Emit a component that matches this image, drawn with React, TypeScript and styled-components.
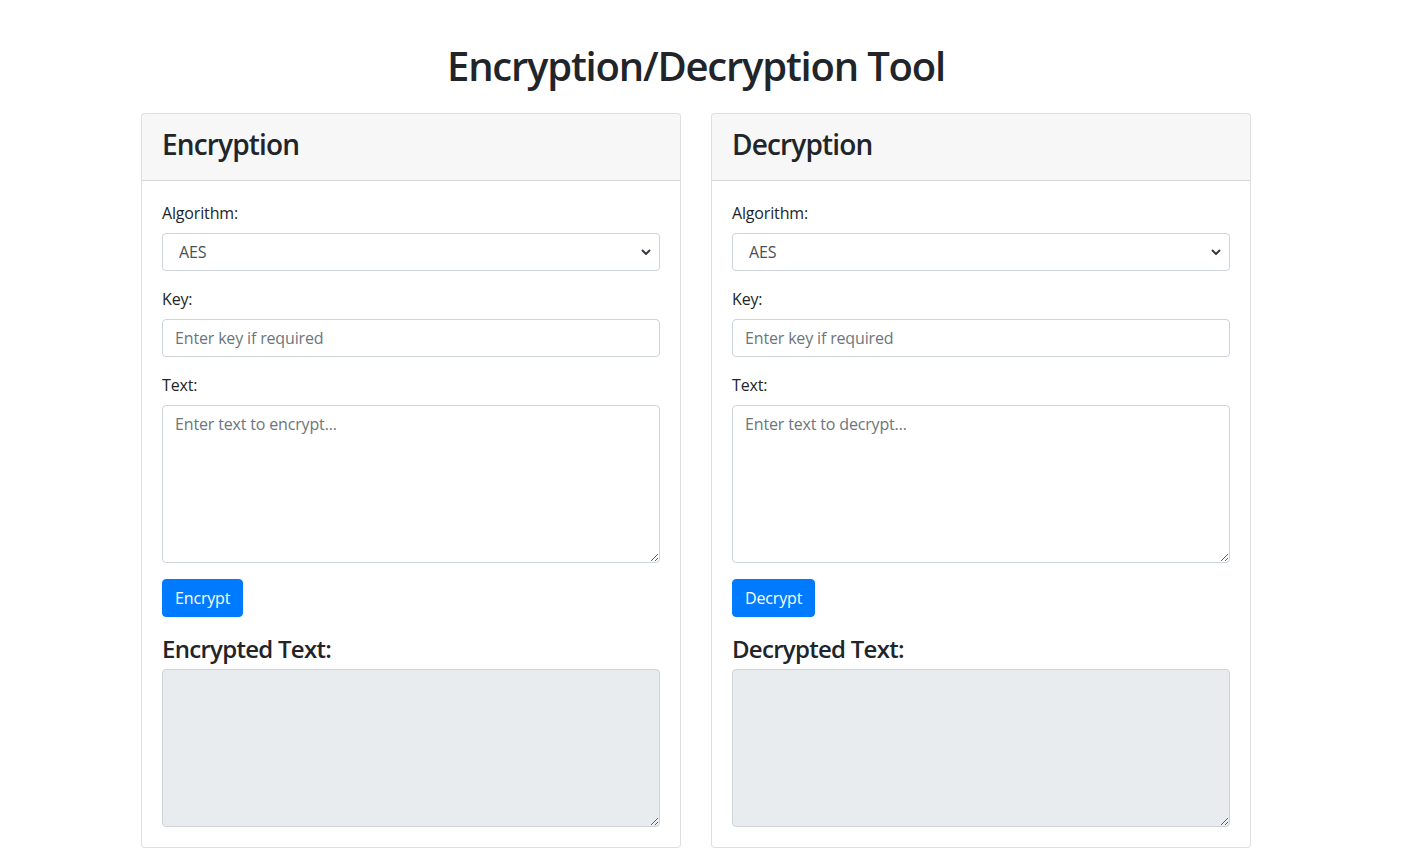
import React, { useState } from 'react';
import styled, { createGlobalStyle } from 'styled-components';

const GlobalStyle = createGlobalStyle`
  * {
    box-sizing: border-box;
  }

  body {
    margin: 0;
    font-family: 'Open Sans', 'Noto Sans', 'Liberation Sans', sans-serif;
    font-size: 16px;
    line-height: 1.5;
    letter-spacing: -0.01em;
    color: #212529;
    background: #fff;
  }

  h1, h3, h4 {
    font-weight: 600;
    line-height: 1.2;
    letter-spacing: -0.03em;
  }
`;

const chevron =
  "url(\"data:image/svg+xml,%3csvg xmlns='http://www.w3.org/2000/svg' viewBox='0 0 10 6'%3e%3cpath fill='none' stroke='%23343a40' stroke-width='2' d='M1 1l4 4 4-4'/%3e%3c/svg%3e\")";

const Page = styled.div`
  padding-right: 25px;
`;

const Container = styled.div`
  max-width: 1110px;
  margin: 0 auto;
`;

const Title = styled.h1`
  margin: 42px 0 23px;
  font-size: 40px;
  text-align: center;
`;

const Row = styled.div`
  display: grid;
  grid-template-columns: 1fr 1fr;
  gap: 30px;
`;

const Card = styled.div`
  border: 1px solid rgba(0, 0, 0, 0.125);
  border-radius: 4px;
  overflow: hidden;
  background: #fff;
`;

const CardHeader = styled.div`
  padding: 14px 20px 10px;
  background: rgba(0, 0, 0, 0.03);
  border-bottom: 1px solid rgba(0, 0, 0, 0.125);
`;

const CardTitle = styled.h3`
  margin: 0 0 8px;
  font-size: 28px;
`;

const CardBody = styled.div`
  padding: 20px;
`;

const FormGroup = styled.div`
  margin-bottom: 16px;
`;

const Label = styled.label`
  display: block;
  margin-bottom: 8px;
`;

const fieldBase = `
  display: block;
  width: 100%;
  padding: 6px 12px;
  font-family: inherit;
  font-size: 16px;
  line-height: 1.5;
  letter-spacing: -0.01em;
  color: #495057;
  background-color: #fff;
  border: 1px solid #ced4da;
  border-radius: 4px;
  outline: none;

  &::placeholder {
    color: #6c757d;
  }
`;

const Select = styled.select`
  ${fieldBase}
  height: 38px;
  padding-left: 16px;
  appearance: none;
  background-image: ${chevron};
  background-repeat: no-repeat;
  background-position: right 8px center;
  background-size: 10px 6px;
`;

const Input = styled.input`
  ${fieldBase}
  height: 38px;
`;

const TextArea = styled.textarea<{ $readOnly?: boolean }>`
  ${fieldBase}
  height: 158px;
  resize: vertical;
  background-color: ${(p) => (p.$readOnly ? '#e9ecef' : '#fff')};
`;

const Button = styled.button`
  display: inline-block;
  height: 38px;
  padding: 6px 12px;
  font-family: inherit;
  font-size: 16px;
  line-height: 1.5;
  letter-spacing: -0.01em;
  color: #fff;
  background: #007bff;
  border: 1px solid #007bff;
  border-radius: 4px;
  cursor: pointer;
`;

const ResultTitle = styled.h4`
  margin: 18px 0 6px;
  font-size: 24px;
`;

type PanelProps = {
  title: string;
  action: string;
  verb: string;
  resultLabel: string;
};

const Panel = (props: PanelProps) => {
  const { title, action, verb, resultLabel } = props;
  const [algorithm, setAlgorithm] = useState('AES');

  return (
    <Card>
      <CardHeader>
        <CardTitle>{title}</CardTitle>
      </CardHeader>
      <CardBody>
        <FormGroup>
          <Label>Algorithm:</Label>
          <Select value={algorithm} onChange={(e) => setAlgorithm(e.target.value)}>
            <option>AES</option>
            <option>DES</option>
            <option>Caesar</option>
            <option>Base64</option>
          </Select>
        </FormGroup>
        <FormGroup>
          <Label>Key:</Label>
          <Input type='text' placeholder='Enter key if required' />
        </FormGroup>
        <FormGroup>
          <Label>Text:</Label>
          <TextArea rows={6} placeholder={`Enter text to ${verb}...`} />
        </FormGroup>
        <Button>{action}</Button>
        <ResultTitle>{resultLabel}</ResultTitle>
        <TextArea rows={6} readOnly $readOnly />
      </CardBody>
    </Card>
  );
};

export default function App() {
  return (
    <>
      <GlobalStyle />
      <Page>
        <Container>
          <Title>Encryption/Decryption Tool</Title>
          <Row>
            <Panel title='Encryption' action='Encrypt' verb='encrypt' resultLabel='Encrypted Text:' />
            <Panel title='Decryption' action='Decrypt' verb='decrypt' resultLabel='Decrypted Text:' />
          </Row>
        </Container>
      </Page>
    </>
  );
}
